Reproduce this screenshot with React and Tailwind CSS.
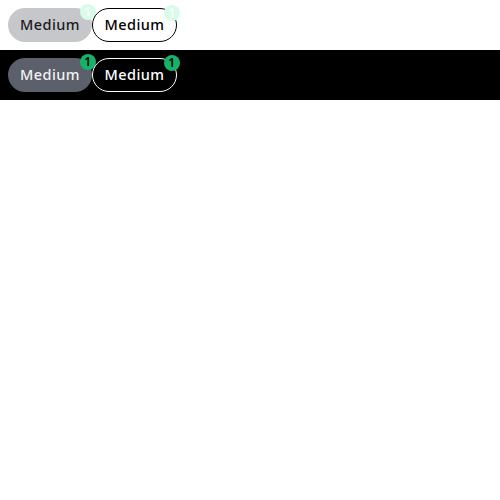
const Badge = ({ dark }) => (
  <span
    className={`absolute -top-[4px] -right-[4px] flex h-[16px] w-[16px] items-center justify-center rounded-full text-[12px] font-semibold leading-none ${
      dark ? "bg-[#17b26a] text-black" : "bg-[#d9fbe9] text-white"
    }`}
  >
    1
  </span>
);

function Row({ dark }) {
  return (
    <div className={`flex items-center p-2 ${dark ? "bg-black" : "bg-white"}`}>
      <button
        className={`relative h-[34px] w-[84px] rounded-full text-[14.5px] font-medium tracking-[0.03em] ${
          dark ? "bg-[#5b606a] text-[#f2f2f2]" : "bg-[#c5c7cb] text-[#1c1c1c]"
        }`}
      >
        Medium
        <Badge dark={dark} />
      </button>
      <button
        className={`relative h-[34px] w-[85px] rounded-full border text-[14.5px] font-medium tracking-[0.03em] ${
          dark ? "border-white text-white" : "border-black text-black"
        }`}
      >
        Medium
        <Badge dark={dark} />
      </button>
    </div>
  );
}

export default function App() {
  return (
    <div className="min-h-[500px] bg-white" style={{ fontFamily: '"Noto Sans", "Open Sans", sans-serif' }}>
      <Row />
      <Row dark />
    </div>
  );
}
